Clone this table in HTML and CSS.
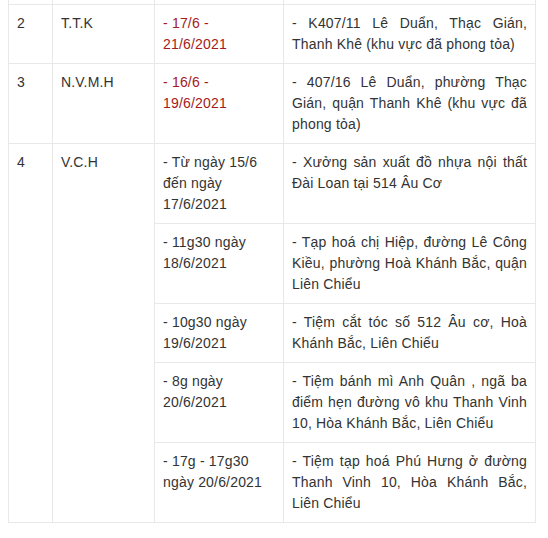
FILE: index.html
```html
<!DOCTYPE html>
<html lang="vi">
<head>
<meta charset="utf-8">
<link rel="stylesheet" href="styles.css">
</head>
<body>
<table class="tbl">
  <colgroup>
    <col class="c1"><col class="c2"><col class="c3"><col class="c4">
  </colgroup>
  <tr class="cut"><td></td><td></td><td></td><td></td></tr>
  <tr>
    <td>2</td>
    <td>T.T.K</td>
    <td class="red">- 17/6 - 21/6/2021</td>
    <td class="just">- K407/11 Lê Duẩn, Thạc Gián, Thanh Khê (khu vực đã phong tỏa)</td>
  </tr>
  <tr>
    <td>3</td>
    <td>N.V.M.H</td>
    <td class="red">- 16/6 - 19/6/2021</td>
    <td class="just">- 407/16 Lê Duẩn, phường Thạc Gián, quận Thanh Khê (khu vực đã phong tỏa)</td>
  </tr>
  <tr>
    <td rowspan="5">4</td>
    <td rowspan="5">V.C.H</td>
    <td>- Từ ngày 15/6 đến ngày 17/6/2021</td>
    <td class="just">- Xưởng sản xuất đồ nhựa nội thất Đài Loan tại 514 Âu Cơ</td>
  </tr>
  <tr>
    <td>- 11g30 ngày 18/6/2021</td>
    <td class="just">- Tạp hoá chị Hiệp, đường Lê Công Kiều, phường Hoà Khánh Bắc, quận Liên Chiểu</td>
  </tr>
  <tr>
    <td>- 10g30 ngày 19/6/2021</td>
    <td class="just">- Tiệm cắt tóc số 512 Âu cơ, Hoà Khánh Bắc, Liên Chiểu</td>
  </tr>
  <tr>
    <td>- 8g ngày 20/6/2021</td>
    <td class="just">- Tiệm bánh mì Anh Quân , ngã ba điểm hẹn đường vô khu Thanh Vinh 10, Hòa Khánh Bắc, Liên Chiểu</td>
  </tr>
  <tr>
    <td>- 17g - 17g30 ngày 20/6/2021</td>
    <td class="just">- Tiệm tạp hoá Phú Hưng ở đường Thanh Vinh 10, Hòa Khánh Bắc, Liên Chiểu</td>
  </tr>
</table>
</body>
</html>
```

FILE: styles.css
```css
html, body {
  margin: 0;
  padding: 0;
  background: #fff;
}

body {
  font-family: "Liberation Sans", Arial, sans-serif;
  font-size: 14px;
  line-height: 1.5;
  letter-spacing: 0.18px;
  color: #333;
}

.tbl {
  margin-left: 8px;
  width: 527px;
  table-layout: fixed;
  border-collapse: collapse;
}

.c1 { width: 44px; }
.c2 { width: 102px; }
.c3 { width: 129px; }
.c4 { width: 252px; }

.tbl td {
  border: 1px solid #e8e8e8;
  padding: 8px;
  vertical-align: top;
}

.tbl .cut td {
  border-top: none;
  padding: 0;
  height: 4px;
}

.red {
  color: #a51a1a;
}

.just {
  text-align: justify;
}
```
